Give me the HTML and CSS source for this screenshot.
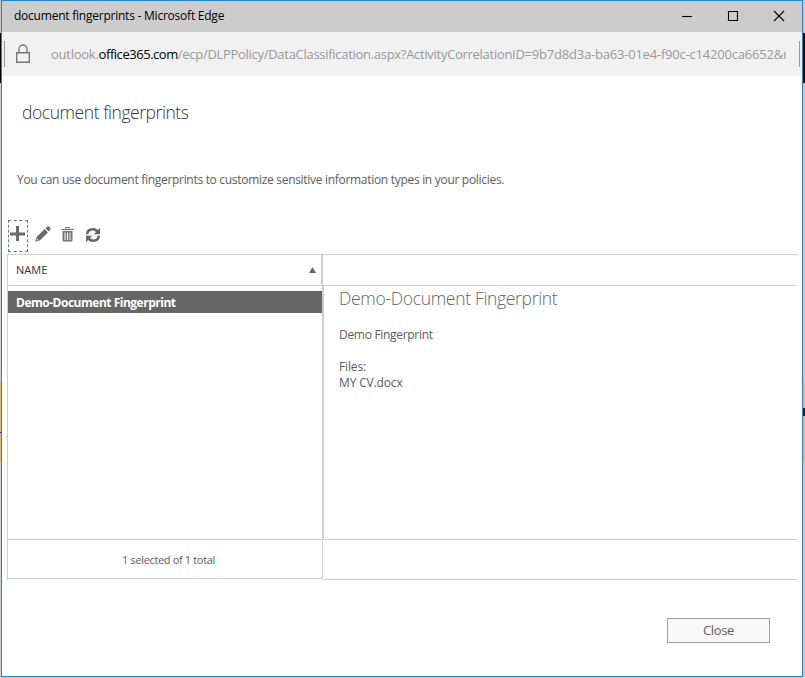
FILE: index.html
```html
<!DOCTYPE html>
<html lang="en">
<head>
<meta charset="utf-8">
<title>document fingerprints</title>
<link rel="stylesheet" href="styles.css">
</head>
<body>
<div class="edge edge-left"></div>
<main class="window">
  <header class="titlebar">
    <span class="window-title">document fingerprints - Microsoft Edge</span>
    <div class="controls">
      <svg width="12" height="12" viewBox="0 0 12 12"><path d="M1 6.5h10"/></svg>
      <svg width="12" height="12" viewBox="0 0 12 12"><path d="M1.5 1.5h9v9h-9z"/></svg>
      <svg width="12" height="12" viewBox="0 0 12 12"><path d="M1 1l10 10M11 1L1 11"/></svg>
    </div>
  </header>
  <div class="address">
    <svg class="lock" width="16" height="20" viewBox="0 0 16 20"><path d="M1.7 8.7h12.6v9.6H1.7zM4 8.5V5a4 4 0 0 1 8 0v3.5"/></svg>
    <div class="url"><span class="sub">outlook.</span><span class="host">office365.com</span><span class="path">/ecp/DLPPolicy/DataClassification.aspx?ActivityCorrelationID=</span><span class="value">9b7d8d3a-ba63-01e4-f90c-c14200ca6652&amp;r</span></div>
  </div>
  <h1>document fingerprints</h1>
  <p class="intro">You can use document fingerprints to customize sensitive information types in your policies.</p>
  <div class="toolbar">
    <span class="add"><svg width="18" height="30" viewBox="0 0 18 30"><path d="M7 5h3v6.500h6v3h-6V20H7v-5.500H1v-3h6z" fill="#6a6a6a"/></svg></span>
    <svg class="pencil" width="18" height="18" viewBox="0 0 18 18"><path d="M1.200 16.800L2.400 12.300 10.600 4 14 7.400 5.800 15.500zM11.600 3.200L13.300 1.600Q14.300.8 15.300 1.800L16.200 2.700Q17 3.700 16.200 4.700L14.700 6.400z" fill="#6a6a6a"/><path d="M2.300 13.500l2.200 2" stroke="#fff" stroke-width=".8"/></svg>
    <svg class="trash" width="13" height="15" viewBox="0 0 13 15"><path d="M4.500 1.500v-1h4v1M.3 2.500h12.400" fill="none" stroke="#6a6a6a"/><path d="M1.500 4h10v9.500q0 1-1 1h-8q-1 0-1-1z" fill="#777"/><path d="M4 5.500v7.500M6.500 5.500v7.500M9 5.500v7.500" stroke="#fff"/></svg>
    <svg class="refresh" width="16" height="16" viewBox="0 0 16 16"><path d="M2.200 7.300Q2.400 2.300 8 2.300q2.900 0 4.500 2.400M13.800 8.700Q13.600 13.700 8 13.700q-2.900 0-4.500-2.400" fill="none" stroke="#666" stroke-width="2.600"/><path d="M15 .8v6.400H8.900zM1 15.200V8.800h6.100z" fill="#666"/></svg>
  </div>
  <section class="grid">
    <div class="list">
      <div class="list-head"><span>NAME</span><svg width="7" height="6" viewBox="0 0 7 6"><path d="M3.500 0L7 6H0z" fill="#666"/></svg></div>
      <div class="list-body"><div class="row">Demo-Document Fingerprint</div></div>
      <div class="list-foot">1 selected of 1 total</div>
    </div>
    <div class="detail">
      <div class="detail-head"></div>
      <div class="detail-body">
        <h2>Demo-Document Fingerprint</h2>
        <p class="kind">Demo Fingerprint</p>
        <p class="files">Files:</p>
        <p class="file">MY CV.docx</p>
      </div>
      <div class="detail-foot"></div>
    </div>
  </section>
  <div class="actions"><button>Close</button></div>
</main>
<div class="edge edge-right"></div>
</body>
</html>
```
FILE: styles.css
```css
* { box-sizing: border-box; }
body { margin: 0; width: 805px; height: 678px; display: flex; overflow: hidden; background: #c9cdd1; font: 12px/16px "Open Sans", "Noto Sans", sans-serif; color: #5c5c5c; }
h1, h2, p { margin: 0; font-weight: 400; white-space: nowrap; }
.window { width: 802px; height: 677px; border: 1px solid #2383d0; background: #fff; flex: none; }
.edge { height: 678px; flex: none; }
.edge-left { width: 1px; background: linear-gradient(#c7c7c7 33px, #000 33px 83px, #cdd1d5 83px 381px, #d5c18c 381px 432px, #303080 432px 433px, #d5c18c 433px 462px, #cdd1d5 462px); }
.edge-right { width: 2px; background: linear-gradient(#c7c7c7 33px, #000 33px 83px, #c4c9cf 83px 382px, #cfbe7e 382px 408px, #222 408px 416px, #cfbe7e 416px 462px, #c9c9cb 462px); }
.titlebar { height: 31px; background: #ccc; display: flex; justify-content: space-between; padding: 0 11px 0 12px; color: #000; }
.window-title { line-height: 30px; white-space: nowrap; letter-spacing: -.23px; }
.controls { display: flex; gap: 34px; padding-top: 9px; margin-right: 6px; }
.controls svg { fill: none; stroke: #000; stroke-width: 1.1; }
.address { height: 44px; background: #f1f1f1; display: flex; align-items: center; padding: 0 2px; }
.address::before, .address::after { content: ""; width: 1px; height: 26px; background: #999; flex: none; }
.lock { margin: -1px 0 0 10px; fill: none; stroke: #777; stroke-width: 1.4; flex: none; }
.url { margin-left: 20px; width: 735px; overflow: hidden; white-space: nowrap; font-size: 13px; line-height: 20px; color: #999; margin-right: auto; }
.sub { letter-spacing: -.25px; }
.host { color: #000; letter-spacing: -.46px; }
.path { letter-spacing: -.29px; }
.value { letter-spacing: -.2px; }
h1 { height: 74px; padding: 24px 0 0 20px; font-size: 17.5px; font-weight: 300; line-height: 24px; letter-spacing: -.44px; color: #333; }
.intro { height: 70px; padding: 22px 0 0 15px; letter-spacing: -.3px; }
.toolbar { height: 34px; display: flex; align-items: flex-start; padding-left: 6px; }
.add { width: 20px; height: 32px; border: 1px dashed #777; display: flex; }
.pencil { margin: 5px 0 0 6px; }
.trash { margin: 7px 0 0 9px; }
.refresh { margin: 7px 0 0 11px; }
.grid { display: flex; margin: 0 5px; height: 326px; border-top: 1px solid #c8ced1; }
.list { width: 316px; height: 325px; display: flex; flex-direction: column; border-left: 1px solid #c8ced1; }
.list-head { height: 31px; display: flex; align-items: center; justify-content: space-between; padding: 0 5px 0 8px; border-right: 2px solid #c8ced1; border-bottom: 1px solid #c8ced1; font-size: 11px; color: #333; }
.list-body { height: 254px; padding-top: 5px; border-bottom: 1px solid #c8ced1; border-right: 1px solid #c8ced1; }
.row { height: 22px; line-height: 23px; padding-left: 8px; background: #666; color: #fff; font-weight: 700; white-space: nowrap; letter-spacing: -.49px; }
.list-foot { height: 39px; line-height: 39px; padding-left: 7px; text-align: center; font-size: 11px; letter-spacing: -.35px; border-right: 1px solid #c8ced1; border-bottom: 1px solid #c8ced1; }
.detail { flex: 1; }
.detail-head { height: 31px; border-bottom: 1px solid #c8ced1; }
.detail-body { height: 254px; padding-left: 15px; border-left: 1px solid #c8ced1; border-bottom: 1px solid #c8ced1; }
.detail-foot { height: 40px; border-bottom: 1px solid #c8ced1; }
h2 { height: 41px; font-size: 17.5px; line-height: 24px; font-weight: 300; letter-spacing: -.32px; color: #666; }
.kind { height: 32px; letter-spacing: -.3px; }
.files, .file { letter-spacing: -.15px; }
.actions { display: flex; justify-content: flex-end; padding: 38px 32px 0 0; }
button { width: 103px; height: 25px; padding: 0; border: 1px solid #97a1a2; background: #f8f8f8; color: #5c5c5c; font: 13px/21px "Open Sans", "Noto Sans", sans-serif; letter-spacing: -.35px; }
```
